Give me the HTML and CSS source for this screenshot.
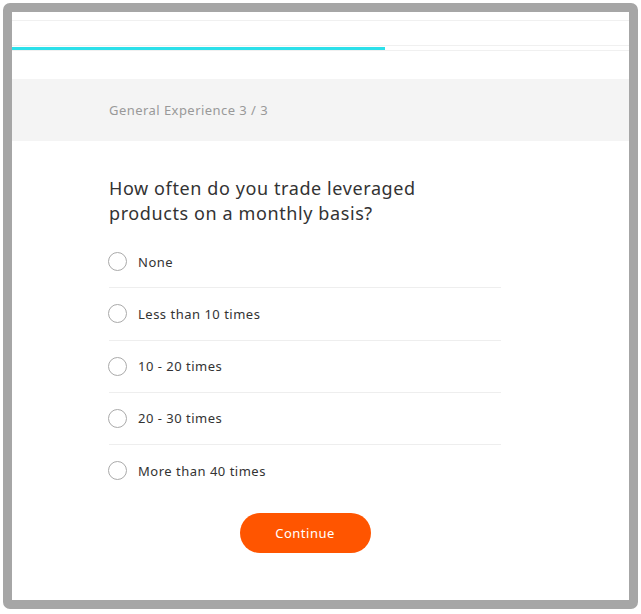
FILE: index.html
```html
<!DOCTYPE html>
<html>
<head>
    <title>Trading Experience</title>
    <link rel="stylesheet" href="styles.css">
</head>
<body>
    <div class="frame">
        <div class="top-strip"></div>
        <div class="progress">
            <div class="progress-fill" style="width: 60.5%"></div>
        </div>
        <div class="step-bar">
            <span class="step-label">General Experience 3 / 3</span>
        </div>

        <form class="question">
            <h2>How often do you trade leveraged products on a monthly basis?</h2>
            <label class="option"><input type="radio" name="freq"><span class="dot"></span>None</label>
            <label class="option"><input type="radio" name="freq"><span class="dot"></span>Less than 10 times</label>
            <label class="option"><input type="radio" name="freq"><span class="dot"></span>10 - 20 times</label>
            <label class="option"><input type="radio" name="freq"><span class="dot"></span>20 - 30 times</label>
            <label class="option"><input type="radio" name="freq"><span class="dot"></span>More than 40 times</label>
            <div class="actions">
                <button type="button">Continue</button>
            </div>
        </form>
    </div>
</body>
</html>
```

FILE: styles.css
```css
body {
    margin: 0;
    background: white;
    font-family: 'Noto Sans', sans-serif;
}
.frame {
    margin: 3px;
    width: 635px;
    height: 606px;
    box-sizing: border-box;
    border: 9px solid #a6a6a6;
    border-radius: 7px;
    overflow: hidden;
    background: white;
}
.top-strip {
    height: 8px;
    border-bottom: 1px solid #f0f0f0;
}
.progress {
    margin-top: 24px;
    height: 4px;
    border-top: 1px solid #f0f0f0;
    border-bottom: 1px solid #f0f0f0;
    display: flex;
    align-items: center;
}
.progress-fill {
    height: 3px;
    background: #2de0ea;
}
.step-bar {
    margin-top: 28px;
    height: 62px;
    background: #f4f4f4;
    display: flex;
    align-items: center;
    padding-left: 97px;
}
.step-label {
    color: #999;
    font-size: 13px;
    letter-spacing: 0.45px;
}
.question {
    width: 392px;
    margin: 0 0 0 97px;
    padding-top: 35px;
}
h2 {
    max-width: 330px;
    margin: 0 0 10px;
    font-size: 18px;
    font-weight: 400;
    line-height: 25px;
    letter-spacing: 0.6px;
    color: #333;
}
.option {
    display: flex;
    align-items: center;
    height: 51.25px;
    font-size: 13px;
    letter-spacing: 0.5px;
    color: #333;
    border-bottom: 1px solid #eeeeee;
    cursor: pointer;
}
.option:nth-last-of-type(1) {
    border-bottom: none;
}
.option input {
    display: none;
}
.dot {
    width: 17px;
    height: 17px;
    border: 1px solid #aaa;
    border-radius: 50%;
    margin-right: 11px;
    margin-left: -1px;
}
.actions {
    display: flex;
    justify-content: center;
    padding-top: 17px;
}
button {
    background: #ff5500;
    color: white;
    border: none;
    width: 131px;
    height: 40px;
    border-radius: 20px;
    font-family: inherit;
    font-size: 13px;
    letter-spacing: 0.5px;
    cursor: pointer;
}
```
